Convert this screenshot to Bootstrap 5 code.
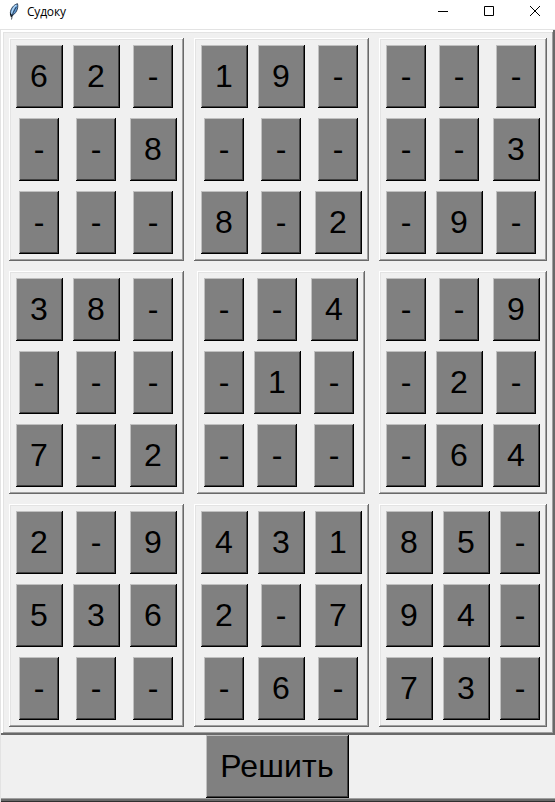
<!DOCTYPE html>
<html lang="ru">
<head>
<meta charset="utf-8">
<meta name="viewport" content="width=device-width, initial-scale=1">
<title>Судоку</title>
<link href="https://cdn.jsdelivr.net/npm/bootstrap@5.3.0/dist/css/bootstrap.min.css" rel="stylesheet">
<style>
body{background:#f0f0f0;font-family:"Liberation Sans",Arial,sans-serif;color:#000}
.window{width:555px;height:802px}
.titlebar{height:29px;padding:0 14px 6px 7px;font:12px/16px "Open Sans","Noto Sans",sans-serif}
.titlebar .caption-text{margin-left:7px;letter-spacing:-.2px}
.titlebar .controls{gap:34px;margin-top:-1px}
.client{height:773px;padding-left:1px;border-top:1px solid #e3e3e3;box-shadow:inset 1px 0 #e3e3e3,inset 0 -1px #303030,inset 0 -3px #696969,inset 0 -4px #a0a0a0}
.board{width:554px;height:705px;padding:3px;grid-template-columns:repeat(3,auto);grid-template-rows:repeat(3,233px);justify-content:start;justify-items:center;align-content:center;
 box-shadow:inset -2px -2px #696969,inset 2px 2px #fff,inset -3px -3px #a0a0a0,inset 3px 3px #e3e3e3}
.block{margin:5px;padding:2px;grid-template-columns:repeat(3,auto);justify-items:center;
 box-shadow:inset -1px -1px #696969,inset 1px 1px #fff,inset -2px -2px #a0a0a0,inset 2px 2px #e3e3e3}
.btn.key{--bs-btn-color:#000;--bs-btn-bg:#808080;--bs-btn-hover-bg:#808080;--bs-btn-hover-color:#000;--bs-btn-active-bg:#808080;
 width:47px;height:63px;padding:0 1px 2px 0;margin:5px;font-size:32px;line-height:36px;transition:none;
 box-shadow:inset -1px -1px #000,inset 1px 1px #c0c0c0,inset -2px -2px #404040}
.btn.key.blank{width:40px;padding-right:0}
/* odd leftover space is rounded toward the left edge */
.block:nth-child(5),.btn.key.nudge{margin-left:4.5px;margin-right:5.5px}
.btn.key.solve{width:143px;margin:0 0 0 205px;padding-right:1px;letter-spacing:.15px}
</style>
<script src="https://cdn.jsdelivr.net/npm/bootstrap@5.3.0/dist/js/bootstrap.bundle.min.js"></script>
</head>
<body>
<div class="window overflow-hidden">
  <header class="titlebar bg-white d-flex align-items-center">
    <svg width="13" height="17" viewBox="0 0 13 17" aria-hidden="true">
      <path d="M10.500 .7C7 1.500 3.500 5.500 3.300 10l1.200 3C8.800 11 11.800 5.500 10.500.7Z" fill="#5f9ad8" stroke="#26374c" stroke-width=".9"/>
      <path d="M9.300 2C6.500 4.500 5 7.500 4.600 11" stroke="#b4d8f5" stroke-width="1.300" fill="none"/>
      <path d="M9.300 4C6.800 7.500 5.200 11.500 4.500 16.500" stroke="#1a2430" stroke-width=".8" fill="none"/>
      <path d="M3.400 10.500l1.100 3.500" stroke="#10151c" stroke-width="1.200"/>
    </svg>
    <span class="caption-text">Судоку</span>
    <div class="controls d-flex ms-auto">
      <svg width="12" height="12" viewBox="0 0 12 12"><path d="M1 6.500h10" stroke="#000"/></svg>
      <svg width="12" height="12" viewBox="0 0 12 12"><path d="M1.500 1.500h9v9h-9z" stroke="#000" fill="none"/></svg>
      <svg width="12" height="12" viewBox="0 0 12 12"><path d="M1 1l10 10M11 1L1 11" stroke="#000"/></svg>
    </div>
  </header>
  <main class="client">
    <div class="board d-grid" id="board"></div>
    <button type="button" class="btn key solve rounded-0 border-0 d-block">Решить</button>
  </main>
</div>
<script>
const blocks = ["62---8---","19----8-2","-----3-9-",
                "38----7-2","--4-1----","--9-2--64",
                "2-9536---","4312-7-6-","85-94-73-"];
const keyClass = (b, i) => {
  if (b[i] !== "-") return "";
  const col = i % 3;
  const wide = [0, 3, 6].some(r => b[r + col] !== "-");
  return wide ? " blank nudge" : " blank";
};
document.getElementById("board").innerHTML = blocks.map(b =>
  '<div class="block d-grid">' + [...b].map((c, i) =>
    `<button type="button" class="btn key rounded-0 border-0${keyClass(b, i)}">${c}</button>`).join("") + "</div>").join("");
</script>
</body>
</html>
